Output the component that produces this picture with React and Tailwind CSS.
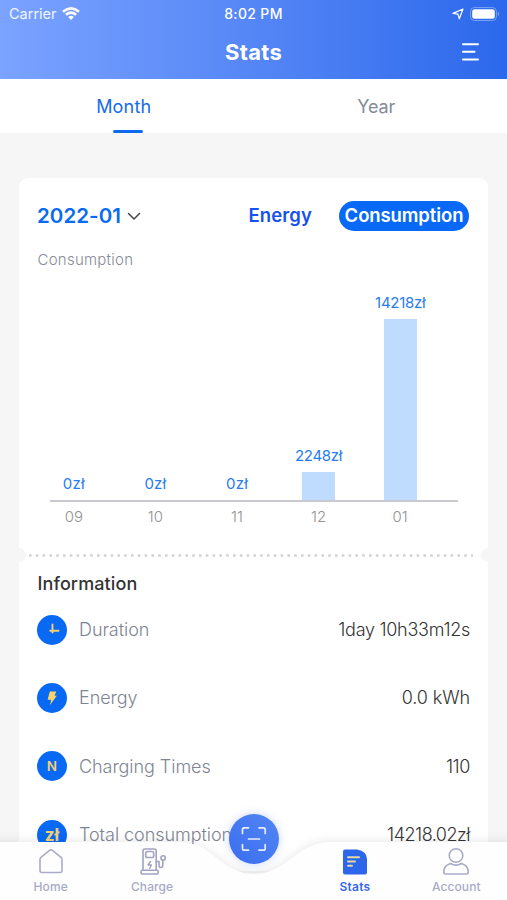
import React from "react";

const months = [
  { label: "09", value: 0, height: 0 },
  { label: "10", value: 0, height: 0 },
  { label: "11", value: 0, height: 0 },
  { label: "12", value: 2248, height: 28 },
  { label: "01", value: 14218, height: 181 },
];

function StatusBar() {
  return (
    <div className="grid h-7 grid-cols-3 items-center pl-[9px] pr-[7px] text-white">
      <div className="flex items-center gap-[5px]">
        <span className="text-[14.5px] leading-5 tracking-[0px] text-white/90">Carrier</span>
        <svg width="18" height="14" viewBox="0 0 18 14" fill="none" stroke="white" strokeWidth="2.5">
          <path d="M1 4.7Q9-2 17 4.7" />
          <path d="M3.9 7.8Q9 3.5 14.1 7.8" />
          <path d="M6.2 9.9Q9 7.6 11.8 9.9L9 13Z" fill="white" stroke="none" />
        </svg>
      </div>
      <div className="whitespace-nowrap pr-[2px] text-center text-[14px] font-medium leading-5 tracking-[0.35px]">8:02 PM</div>
      <div className="flex items-center justify-end gap-[6px]">
        <svg width="12" height="12" viewBox="0 0 12 12" fill="none" stroke="white" strokeWidth="1.2" strokeLinejoin="round">
          <path d="M11 1L7.3 10.8L6 6.2L1 5.4Z" />
        </svg>
        <svg width="30" height="14" viewBox="0 0 30 14">
          <rect x="0.5" y="0.5" width="26" height="13" rx="4" fill="none" stroke="white" strokeOpacity="0.35" />
          <rect x="2.2" y="2.3" width="22.6" height="9.4" rx="2.5" fill="white" />
          <path d="M28 4.6Q30 7 28 9.4Z" fill="white" fillOpacity="0.45" />
        </svg>
      </div>
    </div>
  );
}

function Header() {
  return (
    <header className="h-[79px] bg-linear-to-r from-[#7ba3ff] via-[#5586f6] to-[#2b68eb]">
      <StatusBar />
      <div className="grid h-12 grid-cols-3 items-center pr-[27px]">
        <span />
        <h1 className="pl-[27px] text-center text-[22px] font-bold tracking-[0.3px] text-white">Stats</h1>
        <svg className="justify-self-end" width="19" height="20" viewBox="0 0 19 20" stroke="white" strokeWidth="2" strokeLinecap="round">
          <path d="M2 2.2H17M2 9.8H13.5M2 17.4H17" />
        </svg>
      </div>
    </header>
  );
}

function Tabs() {
  return (
    <nav className="grid h-[54px] grid-cols-2 bg-white text-[18px]">
      <div className="flex flex-col items-center justify-between pl-[2px] pt-[14px] text-[#146bea]">
        <span className="pr-2 leading-[27px] tracking-[0.2px]">Month</span>
        <span className="h-[3px] w-[30px] rounded-full bg-[#0b6af0]" />
      </div>
      <div className="pr-[8px] pt-[14px] text-center leading-[27px] tracking-[-0.1px] text-[#858b98]">Year</div>
    </nav>
  );
}

function Chart() {
  return (
    <div className="ml-[13px] mr-[12px] mt-[14px]">
      <div className="h-[217px] border-b-2 border-[#c9cacf]">
        <div className="-ml-[17px] mr-[17px] flex h-full items-end">
          {months.map((m) => (
            <div key={m.label} className="flex flex-1 flex-col items-center">
              <span className={`mb-[5px] whitespace-nowrap text-[15px] leading-[22px] text-[#287cef] ${m.value ? "tracking-[-0.3px]" : "tracking-[0.2px]"}`}>{m.value}zł</span>
              <div className="w-[33px] bg-[#bfdcff]" style={{ height: m.height }} />
            </div>
          ))}
        </div>
      </div>
      <div className="-ml-[17px] mr-[17px] flex pt-[4px] text-[15px] font-light leading-[22px] text-[#929292]">
        {months.map((m) => (
          <span key={m.label} className="flex-1 text-center">{m.label}</span>
        ))}
      </div>
    </div>
  );
}

function ChartCard() {
  return (
    <section className="h-[377px] rounded-[9px] bg-white px-[18px] pt-[22px]">
      <div className="flex h-[32px] items-center justify-between">
        <div className="flex items-center gap-[6px]">
          <span className="text-[20.5px] font-semibold tracking-[0.05px] text-[#086bf2]">2022-01</span>
          <svg width="14" height="9" viewBox="0 0 14 9" fill="none" stroke="#444" strokeWidth="1.5" strokeLinecap="round" strokeLinejoin="round">
            <path d="M1.5 1.5L7 7L12.5 1.5" />
          </svg>
        </div>
        <div className="mr-px flex items-center gap-[27px] text-[18.5px] font-semibold">
          <span className="pb-px tracking-[0.1px] text-[#1552ed]">Energy</span>
          <span className="flex h-[30px] w-[130px] items-center justify-center rounded-full bg-[#0769f5] pb-px tracking-[-0.1px] text-white">Consumption</span>
        </div>
      </div>
      <p className="mt-[17px] pl-[0.5px] text-[15px] font-light leading-[22px] tracking-[0.25px] text-[#858b98]">Consumption</p>
      <Chart />
    </section>
  );
}

const rows = [
  {
    label: "Duration",
    value: "1day 10h33m12s",
    spacing: "tracking-[-0.28px]",
    icon: (
      <svg width="30" height="30" viewBox="0 0 30 30" stroke="#f4d071" strokeWidth="1.9" strokeLinecap="round">
        <path d="M15.5 9.5V17.5M13.2 15.7H21.5" />
      </svg>
    ),
  },
  {
    label: "Energy",
    value: "0.0 kWh",
    spacing: "tracking-[-0.1px]",
    icon: (
      <svg width="30" height="30" viewBox="0 0 30 30" fill="#f8d568">
        <path d="M12.8 8.6H19.2L17.6 12.8H19.8L13 22L14.2 16.8H10.6Z" />
      </svg>
    ),
  },
  { label: "Charging Times", value: "110", spacing: "tracking-[-0.4px]", icon: <span className="text-[13.5px] font-semibold">N</span> },
  { label: "Total consumption", value: "14218.02zł", spacing: "tracking-[-0.5px]", icon: <span className="text-[17px] font-bold leading-5">zł</span> },
];

function InformationCard() {
  return (
    <section className="rounded-t-[9px] bg-white px-[18px] pt-[15px]">
      <h2 className="pl-[0.5px] text-[18px] font-medium leading-[27px] tracking-[0.1px] text-[#333]">Information</h2>
      <div className="flex flex-col pt-[0.5px]">
        {rows.map((r) => (
          <div key={r.label} className="mb-[4.4px] flex h-[64px] items-center text-[18px] font-light">
            <span className="flex size-[30px] items-center justify-center rounded-full bg-[#0869f5] text-[#f4d071]">{r.icon}</span>
            <span className="ml-[12px] tracking-[-0.05px] text-[#7e8492]">{r.label}</span>
            <span className={`ml-auto text-[#333] ${r.spacing}`}>{r.value}</span>
          </div>
        ))}
      </div>
    </section>
  );
}

function NavItem({ label, active, children }) {
  return (
    <div className={`flex flex-1 flex-col items-center ${active ? "text-[#3468e8]" : "text-[#a9aac6]"}`}>
      <div className="flex h-[30px] items-center">{children}</div>
      <span className={`mt-px text-[12px] leading-[18px] ${active ? "font-semibold tracking-[0.2px]" : "font-medium tracking-[0.1px]"}`}>{label}</span>
    </div>
  );
}

function BottomNav() {
  return (
    <footer className="absolute inset-x-0 bottom-0 h-[92px]">
      <svg className="absolute inset-0 overflow-visible" width="507" height="92" viewBox="0 0 507 92">
        <defs>
          <filter id="navShadow" x="-10%" y="-40%" width="120%" height="180%">
            <feDropShadow dx="0" dy="-2" stdDeviation="4" floodColor="#000" floodOpacity="0.08" />
          </filter>
        </defs>
        <path d="M-20 34H180C213 34 219 66 254 66C289 66 295 34 333 34H527V112H-20Z" fill="#fefeff" filter="url(#navShadow)" />
      </svg>
      <div className="relative flex h-full pt-[39px]">
        <NavItem label="Home">
          <svg width="26" height="28" viewBox="0 0 26 28" fill="none" stroke="#aaabc9" strokeWidth="1.6" strokeLinejoin="round">
            <path d="M2 11.5Q2 10.2 3 9.4L11.5 2.4Q13 1.3 14.5 2.4L23 9.4Q24 10.2 24 11.5V22.5Q24 24.5 22 24.5H4Q2 24.5 2 22.5Z" />
          </svg>
        </NavItem>
        <NavItem label="Charge">
          <svg className="ml-[2px]" width="28" height="30" viewBox="0 0 28 30" fill="none" stroke="#a1a3c2" strokeWidth="1.6" strokeLinejoin="round" strokeLinecap="round">
            <path d="M4 23V4Q4 2 6 2H15.2Q17.2 2 17.2 4V23" />
            <rect x="6.7" y="4.5" width="8" height="6" rx="1.8" />
            <rect x="2" y="23.2" width="17.2" height="3.8" rx="1.2" />
            <path d="M11.4 14.5L9 18H12.4L10.6 21.5" strokeWidth="1.4" />
            <path d="M17.4 14.5H20V18.5Q20 20.5 21.8 20.5Q23.8 20.5 23.8 18.5V13.3" />
            <circle cx="24.1" cy="11" r="2.2" />
          </svg>
        </NavItem>
        <div className="flex-1" />
        <NavItem label="Stats" active>
          <svg width="26" height="28" viewBox="0 0 26 28">
            <path d="M3 1.5H15Q25 3 25 11V24.5Q25 26.5 23 26.5H3Q1 26.5 1 24.5V3.5Q1 1.5 3 1.5Z" fill="#2c66ea" />
            <path d="M6 9.2H17M6 13.5H13M6 17.8H10" stroke="#e4d9a5" strokeWidth="1.9" strokeLinecap="round" />
          </svg>
        </NavItem>
        <NavItem label="Account">
          <svg width="28" height="30" viewBox="0 0 28 30" fill="none" stroke="#aaabc9" strokeWidth="1.6" strokeLinejoin="round">
            <circle cx="14" cy="8.5" r="6.8" />
            <path d="M8.5 16.5Q14 19.8 19.5 16.5Q26.3 18.5 26.3 25Q26.3 27 24.3 27H3.7Q1.7 27 1.7 25Q1.7 18.5 8.5 16.5Z" />
          </svg>
        </NavItem>
      </div>
      <button className="absolute left-[229px] top-[6px] flex size-[50px] items-center justify-center rounded-full bg-linear-to-bl from-[#5286f2] to-[#3b6df0] shadow-[0_0_8px_rgba(80,120,240,0.3)]">
        <svg width="26" height="26" viewBox="0 0 26 26" fill="none" stroke="#e7edff" strokeWidth="1.7" strokeLinecap="round" strokeLinejoin="round">
          <path d="M1.5 7.5V3.5Q1.5 1.8 3.2 1.8H7.5M18 1.8H22.5Q24.2 1.8 24.2 3.5V7.5M24.2 18.5V22.5Q24.2 24.2 22.5 24.2H18M7.5 24.2H3.2Q1.5 24.2 1.5 22.5V18.5M7.5 13H18.5" />
        </svg>
      </button>
    </footer>
  );
}

export default function App() {
  return (
    <div className="relative h-[900px] w-[507px] overflow-hidden bg-[#f6f6f6] font-['Inter','Noto_Sans',sans-serif]">
      <Header />
      <Tabs />
      <main className="px-[19px] pt-[45px]">
        <ChartCard />
        <div className="relative h-0">
          <span className="absolute -left-[7px] -top-[7px] size-[14px] rounded-full bg-[#f6f6f6]" />
          <span className="absolute -right-[7px] -top-[7px] size-[14px] rounded-full bg-[#f6f6f6]" />
          <svg className="absolute left-[8px] -top-px" width="450" height="3" viewBox="0 0 450 3">
            <path d="M2 1.5H446" stroke="#d2d2d2" strokeWidth="2.6" strokeDasharray="2.6 4.2" />
          </svg>
        </div>
        <InformationCard />
      </main>
      <BottomNav />
    </div>
  );
}
